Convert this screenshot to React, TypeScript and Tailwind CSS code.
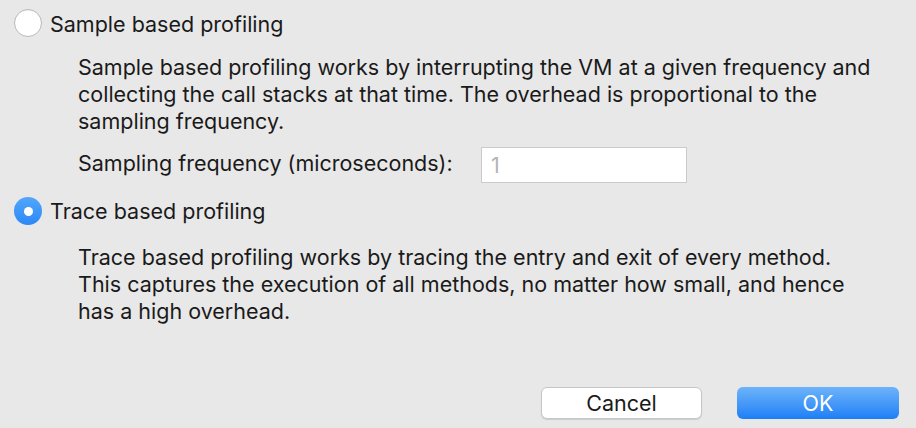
const Radio = ({ checked }: { checked?: boolean }) =>
  checked ? (
    <div className="w-[28px] h-[28px] rounded-full bg-gradient-to-b from-[#52a6fb] to-[#2b88f6] flex items-center justify-center shrink-0">
      <div className="w-[9px] h-[9px] rounded-full bg-white" />
    </div>
  ) : (
    <div className="w-[28px] h-[28px] rounded-full bg-white border border-[#b9b9b9] shadow-[inset_0_1px_1px_rgba(0,0,0,0.05)] shrink-0" />
  )

const App = () => {
  return (
    <div
      className="w-[916px] h-[428px] bg-[#e8e8e8] text-[#1a1a1a] flex flex-col overflow-hidden text-[21.5px]"
      style={{ fontFamily: "Inter, 'Liberation Sans', sans-serif" }}
    >
      <div className="flex items-center gap-[8px] pl-[14px] pt-[9px] h-[37px]">
        <Radio />
        <span className="mt-[2px]">Sample based profiling</span>
      </div>
      <div className="pl-[78px] pt-[17px] leading-[27px] whitespace-nowrap">
        <div>Sample based profiling works by interrupting the VM at a given frequency and</div>
        <div>collecting the call stacks at that time. The overhead is proportional to the</div>
        <div>sampling frequency.</div>
      </div>
      <div className="flex items-center pl-[78px] mt-[12px] h-[36px]">
        <span className="w-[403px] -mt-[4px]">Sampling frequency (microseconds):</span>
        <div className="w-[206px] h-[36px] bg-white border border-[#cbcbcb] flex items-center pl-[9px] text-[#b4b4b4]">1</div>
      </div>
      <div className="flex items-center gap-[8px] pl-[14px] mt-[14px] h-[28px]">
        <Radio checked />
        <span>Trace based profiling</span>
      </div>
      <div className="pl-[78px] pt-[19px] leading-[27px] whitespace-nowrap">
        <div>Trace based profiling works by tracing the entry and exit of every method.</div>
        <div>This captures the execution of all methods, no matter how small, and hence</div>
        <div>has a high overhead.</div>
      </div>
      <div className="flex-1" />
      <div className="flex justify-end gap-[35px] pr-[17px] pb-[9px]">
        <button className="w-[161px] h-[32px] bg-white rounded-[6px] border border-[#c6c6c6] shadow-[0_1px_1px_rgba(0,0,0,0.12)] flex items-center justify-center">
          Cancel
        </button>
        <button className="w-[162px] h-[32px] rounded-[6px] bg-gradient-to-b from-[#6cb3fa] to-[#1a7ff6] text-white flex items-center justify-center">
          OK
        </button>
      </div>
    </div>
  )
}

export default App
